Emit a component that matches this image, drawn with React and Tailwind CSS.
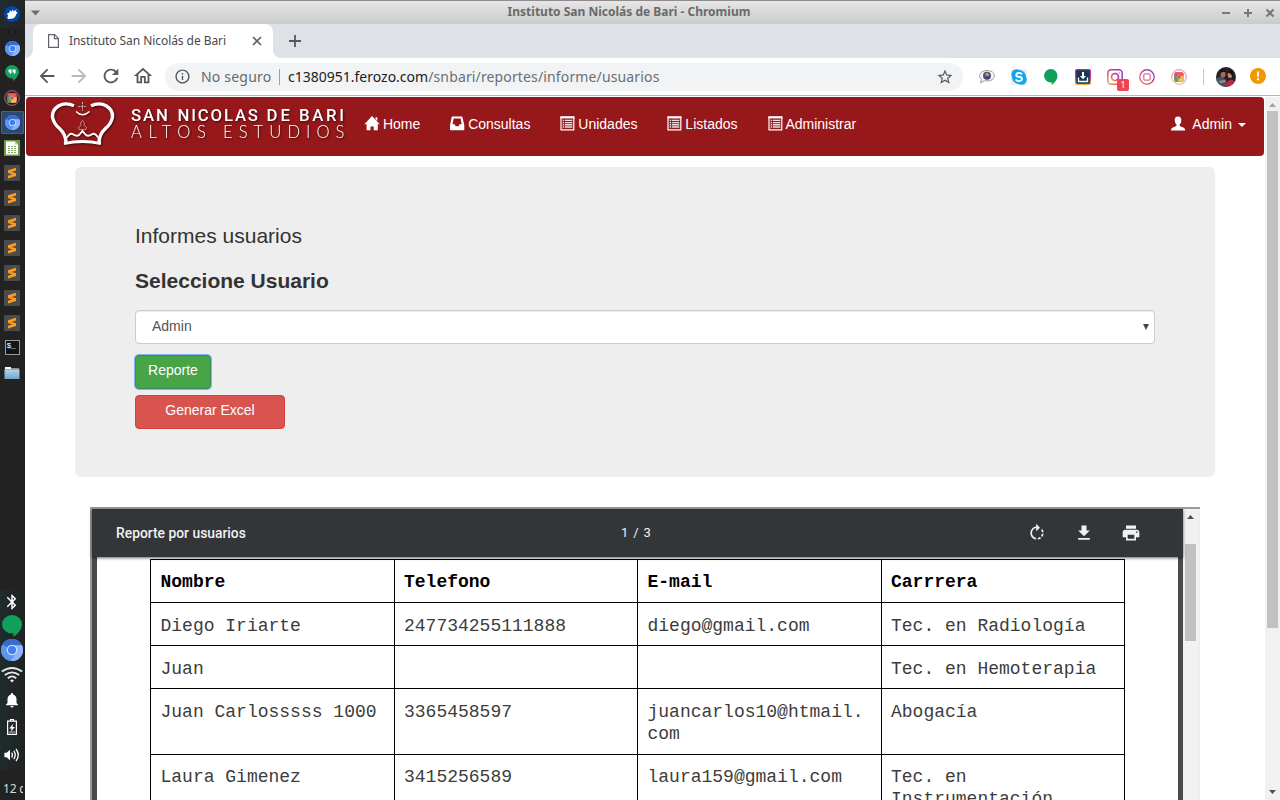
import React from "react";
import {
  MdArrowBack,
  MdArrowForward,
  MdRefresh,
  MdOutlineHome,
  MdStarBorder,
  MdInfoOutline,
  MdPrint,
  MdRotateRight,
  MdBluetooth,
  MdNotifications,
} from "react-icons/md";

/* ---------- Desktop panel ---------- */

function Slot({ children, className = "h-[25px]" }) {
  return <div className={`flex w-[25px] shrink-0 items-center justify-center pr-px ${className}`}>{children}</div>;
}

function ChromiumIcon({ size }) {
  return (
    <svg width={size} height={size} viewBox="0 0 22 22" className="shrink-0">
      <circle cx="11" cy="11" r="11" fill="#5e97f6" />
      <path d="M11 11 L1.3 5.8 A11 11 0 0 1 20.9 6.2 L12 6.2Z" fill="#3a6bd1" />
      <path d="M11 11 L1.3 5.8 A11 11 0 0 0 9.5 21.9 L14 15Z" fill="#5f94ee" />
      <path d="M12 6.2 H21 A11 11 0 0 1 9.5 21.9 L15 14Z" fill="#8db4fb" />
      <circle cx="11" cy="11" r="5.3" fill="#c9dcff" />
      <circle cx="11" cy="11" r="4" fill="#3f7fee" />
    </svg>
  );
}

function MouseLogo() {
  return (
    <svg width="16" height="16" viewBox="0 0 16 16">
      <circle cx="8" cy="8" r="8" fill="#0446a8" />
      <path d="M3 7.5 L5.5 6.5 L6 4 L7.4 5.8 L9 3.2 L9.6 5.5 L12.6 3.4 L11.8 6 L13.6 6.2 L12.2 8.4 Q11 12.6 7 12.8 Q3.6 13.4 3.2 11.4 L4.2 10Z" fill="#fff" />
    </svg>
  );
}

function HangoutsIcon() {
  return (
    <svg width="14" height="16" viewBox="0 0 14 16">
      <path d="M7 0a7 6.8 0 0 1 7 6.8c0 4-3.5 7.2-6 9.2v-2.4H7A7 6.8 0 0 1 7 0Z" fill="#16a05d" />
      <path d="M3.5 4.5h3v3.2L5 9.4V7.5H3.5ZM7.6 4.5h3v3.2L9.1 9.4V7.5H7.6Z" fill="#fff" />
    </svg>
  );
}

function GreenBubble({ w, h }) {
  return (
    <svg width={w} height={h} viewBox="0 0 14 16" preserveAspectRatio="none">
      <path d="M7 0a7 6.7 0 0 1 7 6.7c0 4-3.5 7.3-6 9.3v-2.6H7A7 6.7 0 0 1 7 0Z" fill="#119f59" />
    </svg>
  );
}

function RainbowRing({ pale }) {
  return (
    <svg width="16" height="16" viewBox="0 0 16 16">
      <defs>
        <linearGradient id={pale ? "ringPale" : "ringDark"} x1="1" y1="0" x2="0" y2="1">
          <stop offset="0" stopColor={pale ? "#d79cd8" : "#7b4f9c"} />
          <stop offset=".5" stopColor={pale ? "#f0a0b0" : "#a8446a"} />
          <stop offset="1" stopColor={pale ? "#f3c39a" : "#9d6b4c"} />
        </linearGradient>
      </defs>
      <circle cx="8" cy="8" r="7.3" fill="none" stroke={pale ? "url(#ringPale)" : "url(#ringDark)"} strokeWidth="1.2" />
      <rect x="3.3" y="3.3" width="9.4" height="9.4" rx="2" fill="#dd4a60" />
      <path d="M3.5 6 L8 8 L8 12.7 H5 Q3.3 12.7 3.3 11Z" fill="#4aa567" />
      <path d="M8 8 L12.6 6.5 V11 Q12.6 12.7 11 12.7 H7Z" fill="#f6c343" />
      <path d="M3.3 5 Q3.5 3.3 5 3.3 H11 L12.7 5 V6 H8Z" fill="#ef5a4f" />
      <circle cx="8" cy="8" r="1.900" fill="#b0508c" stroke="#f7b48c" strokeWidth=".6" />
    </svg>
  );
}

function SheetIcon() {
  return (
    <svg width="16" height="16" viewBox="0 0 16 16">
      <rect width="16" height="16" fill="#6f9c4a" />
      <path d="M2 1.5H11L14 4.5V14.5H2Z" fill="#fff" />
      <path d="M11 1.5 L14 4.5 H11Z" fill="#b9d3a0" />
      <path d="M4 6.500H12.4M4 8.500H12.4M4 10.500H12.4M4 12.500H12.4" stroke="#86a56c" strokeWidth="1" strokeDasharray="2 1" />
    </svg>
  );
}

function SublimeIcon() {
  return (
    <svg width="16" height="16" viewBox="0 0 16 16">
      <rect width="16" height="16" rx="1" fill="#4b4b4b" />
      <path d="M4 5.3 L12 2.8 V5.5 L7.6 7 L12 8.3 V11 L4 13.5 V10.8 L8.3 9.4 L4 8Z" fill="#ff9b20" />
      <path d="M4 8 L12 5.5 V5.8 L7.6 7.2Z" fill="#d6770c" />
    </svg>
  );
}

function TerminalIcon() {
  return (
    <div className="flex h-[15px] w-[15px] items-start border border-[#9a9a9a] bg-[#141414] pl-px font-['Liberation_Mono',monospace] text-[8px] leading-[9px] tracking-[-0.3px] text-white">
      $_
    </div>
  );
}

function FolderIcon() {
  return (
    <svg width="16" height="14" viewBox="0 0 16 14">
      <defs>
        <linearGradient id="folder" x1="0" y1="0" x2="0" y2="1">
          <stop offset="0" stopColor="#b5d3ea" />
          <stop offset="1" stopColor="#6fa5cf" />
        </linearGradient>
      </defs>
      <path d="M1 1H7V2.5H15V6H1Z" fill="#fff" />
      <rect x=".5" y="3.5" width="15" height="9.5" fill="url(#folder)" />
      <path d="M.5 3.5H15.5" stroke="#5786aa" strokeWidth=".6" />
    </svg>
  );
}

function Panel() {
  return (
    <aside className="flex h-[800px] w-[25px] shrink-0 flex-col overflow-hidden bg-[#222222]">
      <Slot className="h-[28px] bg-linear-to-r from-[#1f2c2e] to-[#212424]">
        <MouseLogo />
      </Slot>
      <Slot className="h-[8px]">
        <div className="h-1 w-2 border-x border-[#161616]" />
      </Slot>
      <Slot><ChromiumIcon size={15} /></Slot>
      <Slot className="h-[24px]"><HangoutsIcon /></Slot>
      <Slot><RainbowRing /></Slot>
      <Slot>
        <div className="flex h-[23px] w-[23px] items-center justify-center rounded-[1px] border border-[#3465a4] bg-[#2a4a74]">
          <ChromiumIcon size={15} />
        </div>
      </Slot>
      <Slot><SheetIcon /></Slot>
      {[0, 1, 2, 3, 4, 5, 6].map((i) => (
        <Slot key={i}><SublimeIcon /></Slot>
      ))}
      <Slot><TerminalIcon /></Slot>
      <Slot><FolderIcon /></Slot>
      <div className="mt-auto flex flex-col bg-linear-to-r from-[#1f2b2d] to-[#202222]">
        <Slot className="h-[24px]"><MdBluetooth className="text-white" size={18} /></Slot>
        <Slot className="h-[24px]"><GreenBubble w={20} h={22} /></Slot>
        <Slot className="h-[24px]"><ChromiumIcon size={22} /></Slot>
        <Slot className="h-[25px]">
          <svg width="22" height="16" viewBox="0 0 22 16" fill="none" stroke="#e8e8e8" strokeWidth="1.8">
            <path d="M.8 4.6Q11-2.6 21.2 4.6" />
            <path d="M3.8 8Q11 2.6 18.2 8" />
            <path d="M6.8 11.2Q11 7.6 15.2 11.2" />
            <path d="M9 13.4Q11 11.8 13 13.4L11 15.6Z" fill="#e8e8e8" stroke="none" />
          </svg>
        </Slot>
        <Slot className="h-[25px]"><MdNotifications className="text-white" size={18} /></Slot>
        <Slot className="h-[30px]">
          <svg width="10" height="16" viewBox="0 0 10 16">
            <path d="M.6 2.2H9.4V15.4H.6Z" fill="none" stroke="#fff" strokeWidth="1.2" />
            <path d="M3.4 2V.6H6.6V2" fill="none" stroke="#fff" strokeWidth="1.1" />
            <path d="M1.4 12H8.6V14.6H1.4Z" fill="#777" />
            <path d="M6.4 4.6L2.2 9.4H4.6L3.8 12.8L8 8H5.4Z" fill="#fff" />
          </svg>
        </Slot>
        <Slot className="h-[27px] pb-[2px]">
          <svg width="16" height="14" viewBox="0 0 16 14" fill="none" stroke="#fff" strokeWidth="1.3">
            <path d="M.4 4.8H2.6L6 1.8V12.2L2.6 9.2H.4Z" fill="#fff" stroke="none" />
            <path d="M7.6 4.6Q9.2 7 7.6 9.4M9.8 2.9Q12.6 7 9.8 11.1M12 1Q16.6 7 12 13" />
          </svg>
        </Slot>
      </div>
      <div className="h-[31px] shrink-0 overflow-hidden pr-[2px] pl-[3px]">
        <div className="w-[20px] overflow-hidden pt-[11px] font-['Noto_Sans',sans-serif] text-[12px] leading-[18px] tracking-[-0.2px] whitespace-nowrap text-[#d8d8d8]">12 de</div>
      </div>
    </aside>
  );
}

/* ---------- Browser chrome ---------- */

function TitleBar() {
  return (
    <div className="flex h-[24px] shrink-0 items-center border-t border-[#8f8b8e] bg-linear-to-b from-[#e6e6e6] to-[#cbcbcb] pr-[5px] pl-[6px]">
      <svg width="9" height="6" viewBox="0 0 9 6"><path d="M0 .5H9L4.5 5.5Z" fill="#6c6c6c" /></svg>
      <div className="flex-1 pr-[3px] pb-px text-center font-['Noto_Sans',sans-serif] text-[12px] leading-[18px] font-bold text-[#6a6a6a]">
        Instituto San Nicolás de Bari - Chromium
      </div>
      <svg width="54" height="10" viewBox="0 0 54 10" stroke="#777" strokeWidth="2" fill="none">
        <path d="M1 5H9M23 5H31M27 1V9M45.5 1.5L52.5 8.5M52.5 1.5L45.5 8.5" />
      </svg>
    </div>
  );
}

function TabStrip() {
  return (
    <div className="flex h-[34px] shrink-0 bg-[#dee1e6]">
      <div className="w-[8px] bg-white"><div className="h-full rounded-br-[8px] bg-[#dee1e6]" /></div>
      <div className="flex w-[240px] items-center rounded-t-[8px] bg-white pr-[11px] pl-[15px]">
        <svg width="11" height="14" viewBox="0 0 11 14" fill="none" stroke="#5f6368" strokeWidth="1.2">
          <path d="M.6 .6H6.6L10.4 4.4V13.4H.6ZM6.4 .8V4.6H10.2" />
        </svg>
        <span className="flex-1 pl-[10px] font-['Noto_Sans',sans-serif] text-[12px] leading-[18px] tracking-[-0.06px] text-[#45494d]">Instituto San Nicolás de Bari</span>
        <svg width="10" height="10" viewBox="0 0 10 10" stroke="#5f6368" strokeWidth="1.6"><path d="M1 1L9 9M9 1L1 9" /></svg>
      </div>
      <div className="w-[8px] bg-white"><div className="h-full rounded-bl-[8px] bg-[#dee1e6]" /></div>
      <svg className="mt-[11px] ml-[8px]" width="12" height="12" viewBox="0 0 12 12" stroke="#55595e" strokeWidth="1.8"><path d="M0 6H12M6 0V12" /></svg>
    </div>
  );
}

function Extensions() {
  return (
    <div className="flex items-center gap-[16px]">
      <svg width="16" height="16" viewBox="0 0 16 16">
        <path d="M8 1.5c4.2 0 7.4 2.2 7.4 5.2S12.200 12 8 12c-1 0-1.800-.1-2.600-.4L1.500 14l1-3.600C1.200 9.400.6 8.200.6 6.700.6 3.700 3.800 1.500 8 1.500Z" fill="#f4f4f4" stroke="#9b9b9b" />
        <circle cx="8" cy="6.700" r="4" fill="#4f5669" />
        <circle cx="8.200" cy="5.500" r="1.800" fill="#c9929a" />
        <path d="M6 10Q7 7 10.500 7.500L11 9Q9 11 6 10Z" fill="#2d438c" />
      </svg>
      <svg width="16" height="16" viewBox="0 0 16 16">
        <rect width="16" height="16" fill="#e9eff3" />
        <circle cx="5.500" cy="5.500" r="5.200" fill="#12a5ea" />
        <circle cx="10.500" cy="10.500" r="5.200" fill="#12a5ea" />
        <circle cx="8" cy="8" r="7" fill="#12a5ea" />
        <path d="M11 5.300Q10.300 3.900 8 3.900T5.300 5.800 8 7.800 10.900 10 8 12.100 4.900 10.500" fill="none" stroke="#fff" strokeWidth="1.900" />
      </svg>
      <div className="flex w-[16px] justify-center"><GreenBubble w={13.5} h={16} /></div>
      <svg width="16" height="16" viewBox="0 0 16 16">
        <defs><linearGradient id="dl" x1="0" y1="0" x2="0" y2="1"><stop offset="0" stopColor="#a52cb0" /><stop offset=".6" stopColor="#c8457a" /><stop offset="1" stopColor="#f5b14a" /></linearGradient></defs>
        <rect width="16" height="16" rx="2" fill="url(#dl)" />
        <rect x="1.300" y="1.300" width="13.400" height="13.400" rx="1" fill="#123b52" />
        <path d="M3.500 8.500V12.500H12.500V8.500" fill="none" stroke="#fff" strokeWidth="1.300" />
        <path d="M7 3H9V7H11L8 10.300L5 7H7Z" fill="#fff" />
      </svg>
      <div className="relative h-[16px] w-[16px]">
        <svg width="16" height="16" viewBox="0 0 16 16" fill="none" stroke="url(#ig)">
          <defs><linearGradient id="ig" x1="1" y1="0" x2="0" y2="1"><stop offset="0" stopColor="#8c3ac4" /><stop offset=".5" stopColor="#d83a7c" /><stop offset="1" stopColor="#f7a845" /></linearGradient></defs>
          <rect x=".8" y=".8" width="14.400" height="14.400" rx="3.500" strokeWidth="1.500" />
          <circle cx="8" cy="8" r="3.500" strokeWidth="1.700" />
          <circle cx="12.200" cy="3.900" r=".8" fill="#f09a50" stroke="none" />
        </svg>
        <div className="absolute top-[10px] left-[10px] flex h-[12px] w-[12px] items-center justify-center rounded-[2px] bg-[#ef4553] font-['Noto_Sans',sans-serif] text-[9px] leading-[12px] text-white">1</div>
      </div>
      <svg width="16" height="16" viewBox="0 0 16 16" fill="none" stroke="url(#ig2)">
        <defs><linearGradient id="ig2" x1="1" y1="0" x2="0" y2="1"><stop offset="0" stopColor="#6550b5" /><stop offset=".5" stopColor="#cf4490" /><stop offset="1" stopColor="#ef8a55" /></linearGradient></defs>
        <circle cx="8" cy="8" r="7.200" strokeWidth="1.400" />
        <rect x="4.800" y="4.800" width="6.400" height="6.400" rx="1.500" stroke="#d9719f" strokeWidth="1.300" />
      </svg>
      <RainbowRing pale />
    </div>
  );
}

function Toolbar() {
  return (
    <div className="flex h-[37px] shrink-0 items-center bg-white pl-[11px] font-['Noto_Sans',sans-serif] text-[14px]">
      <div className="flex items-center gap-[10px] pb-px text-[#54585d]">
        <MdArrowBack size={22} />
        <MdArrowForward size={22} className="text-[#b9babc]" />
        <MdRefresh size={22} />
        <MdOutlineHome size={22} />
      </div>
      <div className="ml-[11px] flex h-[28px] w-[798px] shrink-0 items-center rounded-full bg-[#f1f3f4] pr-[9px] pl-[9px]">
        <MdInfoOutline size={17} className="text-[#54585d]" />
        <span className="ml-[10px] w-[73px] tracking-[0.2px] text-[#66696e]">No seguro</span>
        <div className="mr-[8px] ml-[5px] h-[16px] w-px bg-[#9aa0a6]" />
        <span className="flex-1 tracking-[0.14px] text-[#6b6f74]"><span className="tracking-normal text-[#202124]">c1380951.ferozo.com</span>/snbari/reportes/informe/usuarios</span>
        <MdStarBorder size={18} className="text-[#54585d]" />
      </div>
      <div className="ml-[16px]"><Extensions /></div>
      <div className="ml-[16px] h-[16px] w-px bg-[#c4c7ca]" />
      <svg className="ml-[12px]" width="20" height="20" viewBox="0 0 20 20">
        <clipPath id="avatar"><circle cx="10" cy="10" r="10" /></clipPath>
        <g clipPath="url(#avatar)">
          <rect width="20" height="20" fill="#2b2024" />
          <path d="M0 12Q5 7 10 13L11 20H0Z" fill="#3c5573" />
          <path d="M10 16Q14 10 18 14L19 20H10Z" fill="#b32a45" />
          <ellipse cx="7" cy="7" rx="2.500" ry="3.600" fill="#a86a57" />
          <ellipse cx="14" cy="7.500" rx="2.300" ry="3.600" fill="#c38872" />
          <path d="M4 4Q7 1 10 4V6Q7 3 4 7ZM11.500 5Q14 1.500 17 5V13Q16 5 11.500 6Z" fill="#161013" />
          <path d="M3 14L9 13L10 15L4 16Z" fill="#b98676" />
        </g>
      </svg>
      <svg className="mb-px ml-[14px]" width="16" height="16" viewBox="0 0 16 16">
        <circle cx="8" cy="8" r="8" fill="#f29900" /><path d="M7 3.500H9V8.800H7ZM7 10.300H9V12.300H7Z" fill="#fff" />
      </svg>
    </div>
  );
}

/* ---------- Page ---------- */

function Logo() {
  return (
    <svg width="300" height="50" viewBox="50 99 300 50" className="[filter:drop-shadow(1px_1px_1px_rgba(0,0,0,.6))]">
      <g fill="none" stroke="#fff" strokeLinecap="butt">
        <path d="M74 105.800Q65.500 101.800 58.500 106Q51.500 110.500 52.600 117.500Q54 124 59.500 128.500Q66 134.500 66 143" strokeWidth="3.400" />
        <path d="M91 105.800Q99.500 101.800 106.500 106Q113.500 110.500 112.400 117.500Q111 124 105.500 128.500Q99 134.500 99 143" strokeWidth="3.400" />
        <path d="M64 143.600Q82.500 139.200 101 143.600" strokeWidth="3" />
        <path d="M67 137.500Q70 132.500 73 134.300Q77.500 137.500 80 134L82.500 131L85 134Q87.500 137.500 92 134.300Q95 132.500 98 137.500" strokeWidth="1.900" />
        <path d="M76 111.500Q82.500 118 89.500 111.500" strokeWidth="1.500" />
        <path d="M82.500 102V111M78.500 106.500H86.500" strokeWidth="1" strokeDasharray="2 .7" opacity=".65" />
        <path d="M82.500 120.500Q79.500 123 81 125.500Q77 127 79 129.500H86Q88 127 84 125.500Q85.500 123 82.500 120.500Z" strokeWidth=".7" opacity=".65" />
      </g>
      <g fill="#fff" fontFamily="Roboto, sans-serif" fontWeight="500" fontSize="16.800">
        <text x="131" y="121" textLength="37">SAN</text>
        <text x="177.500" y="121" textLength="80.500">NICOLAS</text>
        <text x="266.500" y="121" textLength="23.500">DE</text>
        <text x="299" y="121" textLength="45">BARI</text>
      </g>
      <g fill="#fff" fontFamily="Lato, sans-serif" fontWeight="300" fontSize="16.600">
        <text x="131" y="138" textLength="75">ALTOS</text>
        <text x="223" y="138" textLength="121.500">ESTUDIOS</text>
      </g>
    </svg>
  );
}

function HomeGlyph() {
  return <svg width="14" height="14" viewBox="0 0 14 14" className="overflow-visible" fill="#fff"><path d="M7 -.9L14.800 7.200H12.800V13.300H8.700V9.500H5.500V13.300H1.600V7.200H-.6ZM10.500 .3H12.300V4L10.500 2Z" /></svg>;
}
function InboxGlyph() {
  return <svg width="14" height="14" viewBox="0 0 14 14" className="overflow-visible" fill="#fff"><path fillRule="evenodd" d="M2.300 -.4H11.700Q12.300 -.4 12.500 .4L14.300 8.200V12.500Q14.300 13.300 13.500 13.300H.7Q0 13.300 0 12.500V8.200L1.600 .4Q1.800 -.4 2.300 -.4ZM3.600 1.600L2.600 7.200H4.600L5.600 9.200H8.600L9.600 7.200H11.600L10.600 1.600Z" /></svg>;
}
function ListGlyph() {
  return (
    <svg width="14" height="14" viewBox="-.4 .6 14 14" className="overflow-visible">
      <path d="M.6 .6H13.400V13.400H.6Z" fill="#96181a" stroke="#fff" strokeWidth="1.200" />
      <path d="M0 0H14V2H0Z" fill="#fff" />
      <path d="M2.300 4H3.800M2.300 6.200H3.800M2.300 8.400H3.800M2.300 10.600H3.800M4.600 4H11.900M4.600 6.200H11.900M4.600 8.400H11.900M4.600 10.600H11.900" stroke="#fff" strokeWidth="1.400" opacity=".85" />
    </svg>
  );
}
function UserGlyph() {
  return <svg width="14" height="14" viewBox="0 .6 14 14" className="overflow-visible" fill="#fff"><path d="M7 0Q10.300 0 10.300 3.500Q10.400 6.500 8.600 8V9.200Q9 9.900 12.800 11.300Q14.200 12 14.200 14H0Q0 12 1.300 11.300Q5 9.900 5.500 9.200V8Q3.700 6.500 3.700 3.500Q3.700 0 7 0Z" /></svg>;
}

const links = [
  { label: "Home", Icon: HomeGlyph },
  { label: "Consultas", Icon: InboxGlyph },
  { label: "Unidades", Icon: ListGlyph },
  { label: "Listados", Icon: ListGlyph },
  { label: "Administrar", Icon: ListGlyph },
];

function Navbar() {
  return (
    <nav className="ml-px flex h-[59px] w-[1238px] shrink-0 items-start rounded-[4px] bg-[#96181a] pl-[24px] text-[14px] leading-[20px] text-white">
      <div className="mt-[2px] w-[300px] shrink-0"><Logo /></div>
      <ul className="mt-[17px] flex">
        {links.map(({ label, Icon }) => (
          <li key={label} className="flex items-center gap-[3.9px] px-[15px]">
            <Icon />
            <span>{label}</span>
          </li>
        ))}
      </ul>
      <div className="mt-[17px] mr-[18px] ml-auto flex items-center">
        <UserGlyph />
        <span className="ml-[7px]">Admin</span>
        <svg className="mt-px ml-[6px]" width="8" height="4" viewBox="0 0 8 4"><path d="M0 0H8L4 4Z" fill="#fff" /></svg>
      </div>
    </nav>
  );
}

function UserForm() {
  return (
    <section className="ml-[50px] flex h-[310px] w-[1140px] shrink-0 flex-col items-start rounded-[6px] bg-[#eee] px-[60px] pt-[54px] text-[#333]">
      <p className="text-[21px] leading-[30px]">Informes usuarios</p>
      <label className="mt-[15px] text-[21px] leading-[30px] font-bold">Seleccione Usuario</label>
      <div className="mt-[14px] flex h-[34px] w-[1020px] items-center justify-between rounded-[4px] border border-[#ccc] bg-white pr-[5px] pb-[2px] pl-[16px] text-[14px] text-[#555] shadow-[inset_0_1px_1px_rgba(0,0,0,0.075)]">
        <span>Admin</span>
        <svg width="6" height="7" viewBox="0 0 6 7"><path d="M0 1H6L3 7Z" fill="#444" /></svg>
      </div>
      <button className="mt-[11px] h-[34px] w-[76px] rounded-[4px] border border-[#398d5c] bg-[#47a447] pb-[5px] text-[14px] leading-[20px] text-white shadow-[0_0_0_1px_#8ab4f0]">Reporte</button>
      <button className="mt-[6px] h-[34px] w-[150px] rounded-[4px] border border-[#d43f3a] bg-[#d9534f] pb-[5px] text-[14px] leading-[20px] text-white">Generar Excel</button>
    </section>
  );
}

const rows = [
  { h: "h-[43px]", pad: "pt-[12px]", cells: ["Diego Iriarte", "247734255111888", "diego@gmail.com", "Tec. en Radiología"] },
  { h: "h-[43px]", pad: "pt-[12px]", cells: ["Juan", "", "", "Tec. en Hemoterapia"] },
  { h: "h-[66px]", pad: "pt-[12px]", cells: ["Juan Carlosssss 1000", "3365458597", "juancarlos10@htmail. com", "Abogacía"] },
  { h: "h-[66px]", pad: "pt-[11px]", cells: ["Laura Gimenez", "3415256589", "laura159@gmail.com", "Tec. en Instrumentación"] },
];

function Cell({ children, className }) {
  return <div className={`border-r border-b border-black pl-[9.5px] ${className}`}>{children}</div>;
}

function PdfViewer() {
  return (
    <section className="ml-[65px] flex h-[293px] w-[1110px] shrink-0 flex-col border-t-2 border-l-2 border-[#9a9a9a] bg-[#525659]">
      <div className="flex min-h-0 flex-1">
        <div className="flex min-w-0 flex-1 flex-col">
          <header className="relative flex h-[48px] shrink-0 items-center bg-[#323639] pr-[42px] pl-[24px] font-[Roboto,sans-serif] text-[#f1f1f1] shadow-[0_1px_3px_rgba(0,0,0,0.6)]">
            <span className="w-[505px] text-[13.85px] font-medium">Reporte por usuarios</span>
            <span className="flex-1 text-[13px] tracking-[0.85px]">1 / 3</span>
            <div className="flex items-center gap-[27px]">
              <MdRotateRight size={20} />
              <svg width="20" height="20" viewBox="0 0 24 24" fill="#f1f1f1"><path d="M19 9h-4V3H9v6H5l7 7 7-7zM5 18v2h14v-2H5z" /></svg>
              <MdPrint size={20} />
            </div>
          </header>
          <div className="flex min-h-0 flex-1 justify-center overflow-hidden bg-[#474b4e]">
            <div className="w-[1081px] overflow-hidden bg-white pt-[2px] pl-[53px] font-['Courier_New','Liberation_Mono',monospace] text-[18px] leading-[22px]">
              <div className="w-[975px] border-t border-l border-black">
                <div className="grid h-[43px] grid-cols-4">
                  {["Nombre", "Telefono", "E-mail", "Carrrera"].map((t) => <Cell key={t} className="pt-[11px] font-bold text-black">{t}</Cell>)}
                </div>
                {rows.map((r) => (
                  <div key={r.cells[0]} className={`grid grid-cols-4 ${r.h}`}>
                    {r.cells.map((c, i) => <Cell key={i} className={`text-[#3c3c3c] ${r.pad}`}>{c}</Cell>)}
                  </div>
                ))}
              </div>
            </div>
          </div>
        </div>
        <div className="flex w-[17px] shrink-0 flex-col border-r-2 border-[#eeeeee] bg-[#f1f1f1]">
          <svg className="mt-[6px] ml-[4px]" width="7" height="4" viewBox="0 0 7 4"><path d="M3.500 0L7 4H0Z" fill="#505050" /></svg>
          <div className="mt-[25px] ml-[2px] h-[97px] w-[11px] bg-[#c1c1c1]" />
        </div>
      </div>
    </section>
  );
}

function PageScrollbar() {
  return (
    <div className="flex w-[15px] shrink-0 flex-col items-center bg-[#f1f1f1]">
      <svg className="mt-[6px] shrink-0" width="7" height="4" viewBox="0 0 7 4"><path d="M3.500 0L7 4H0Z" fill="#a3a3a3" /></svg>
      <div className="mt-[4px] h-[517px] w-[11px] bg-[#c1c1c1]" />
      <svg className="mt-auto mb-[6px] shrink-0" width="7" height="4" viewBox="0 0 7 4"><path d="M0 0H7L3.500 4Z" fill="#505050" /></svg>
    </div>
  );
}

export default function App() {
  return (
    <div className="flex h-[800px] w-[1280px] overflow-hidden bg-white font-['Liberation_Sans',Arial,sans-serif]">
      <Panel />
      <div className="flex min-w-0 flex-1 flex-col">
        <TitleBar />
        <TabStrip />
        <Toolbar />
        <div className="flex min-h-0 flex-1 border-t border-[#b3b6ba] pt-px">
          <main className="flex min-w-0 flex-1 flex-col overflow-hidden">
            <Navbar />
            <div className="h-[11px] shrink-0" />
            <UserForm />
            <div className="h-[30px] shrink-0" />
            <PdfViewer />
          </main>
          <PageScrollbar />
        </div>
      </div>
    </div>
  );
}
